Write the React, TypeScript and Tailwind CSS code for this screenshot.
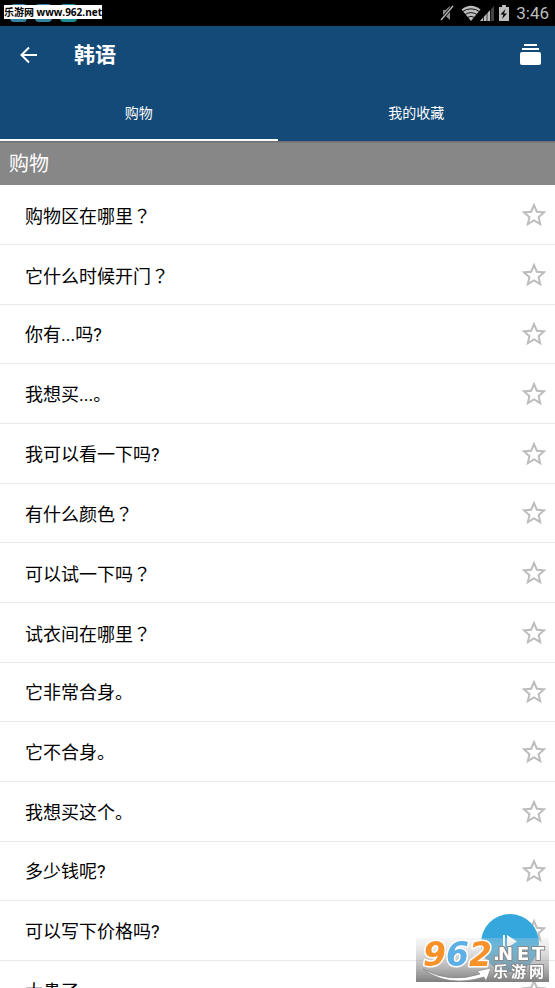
import { Fragment, useState } from "react";

const phrases = [
  "购物区在哪里？",
  "它什么时候开门？",
  "你有...吗?",
  "我想买...。",
  "我可以看一下吗?",
  "有什么颜色？",
  "可以试一下吗？",
  "试衣间在哪里？",
  "它非常合身。",
  "它不合身。",
  "我想买这个。",
  "多少钱呢?",
  "可以写下价格吗?",
  "太贵了。",
];

// Full-width question marks sit centred in their cell
function Phrase({ text }: { text: string }) {
  const parts = text.split("？");
  return (
    <span className="pt-0.5 text-[18px] leading-6 text-black">
      {parts.map((part, idx) => (
        <Fragment key={idx}>
          {idx > 0 && <span lang="zh-TW" className="font-['Noto_Sans_CJK_TC',sans-serif]">？</span>}
          {part}
        </Fragment>
      ))}
    </span>
  );
}

function StatusBar() {
  return (
    <div className="relative flex h-[26px] items-center justify-end bg-black pr-1.5 text-[#bdbdbd]">
      <div className="absolute left-[10px] top-1 flex gap-2">
        <span className="h-[18px] w-[17px] rounded bg-[#3583a0]" />
        <span className="h-[18px] w-[17px] rounded bg-[#3583a0]" />
        <span className="h-[18px] w-[17px] rounded bg-[#1c8c96]" />
      </div>
      <div className="absolute left-1 top-[5px] flex h-[14px] w-[98px] items-center justify-center whitespace-nowrap bg-white font-['Open_Sans','Noto_Sans_CJK_SC',sans-serif] text-[10px] font-bold leading-[14px] text-black">
        乐游网 www.962.net
      </div>
      <svg className="h-4 w-[70px]" viewBox="0 0 70 16" fill="currentColor" aria-hidden="true">
        <path d="M3 5h2.500l4.500-4v14l-4.500-4H3z" opacity=".75" />
        <path d="M1 15 13 1" stroke="#000" strokeWidth="3" />
        <path d="M1 15 13 1" stroke="currentColor" strokeWidth="1.3" />
        <path d="M21.500 4.500Q31 -3 40.500 4.500L31 16z" />
        <path d="M22 6.800Q31 .8 40 6.800M24.500 9.800Q31 5.400 37.500 9.800M27 12.600Q31 10 35 12.600" stroke="#000" strokeWidth=".9" fill="none" />
        <path d="M54 1v15H40z" opacity=".35" />
        <path d="M50 5.300V16H40z" />
        <path d="M43.500 4v12M47 4v12M50.500 4v12" stroke="#000" strokeWidth=".7" />
        <path d="M59 2h3V0h4v2h3v14H59z" />
        <path d="m65.500 4-5 5.500h3L62 14l5-5.500h-3z" fill="#000" />
      </svg>
      <span className="ml-1.5 text-[17px] leading-6">3:46</span>
    </div>
  );
}

function Star() {
  return (
    <svg className="size-[30px]" viewBox="0 0 24 24" fill="#bdbdbd" aria-hidden="true">
      <path d="M22 9.240l-7.190-.620L12 2 9.190 8.630 2 9.240l5.460 4.730L5.820 21 12 17.270 18.180 21l-1.630-7.030zM12 15.400l-3.760 2.270 1-4.280-3.320-2.880 4.380-.380L12 6.100l1.710 4.040 4.380.380-3.320 2.880 1 4.280z" />
    </svg>
  );
}

function Watermark() {
  return (
    <svg
      className="pointer-events-none fixed bottom-1.5 right-1.5 h-11 w-[133px] overflow-visible"
      viewBox="0 0 133 44"
      role="img"
      aria-label="962.NET 乐游网"
    >
      <defs>
        <linearGradient id="shade" x2="0" y2="1">
          <stop stopColor="#ddd" stopOpacity=".25" />
          <stop offset="1" stopColor="#777" stopOpacity=".95" />
        </linearGradient>
      </defs>
      <rect width="133" height="44" fill="url(#shade)" />
      <path d="M7 31Q34 46 64 36l-3-3 14-3-5 13-2-4Q32 50 7 31z" fill="#fff" stroke="#888" strokeWidth=".7" />
      <g
        fontFamily="DejaVu Sans, sans-serif"
        fontWeight="bold"
        fontStyle="italic"
        fontSize="33"
        stroke="#fff"
        strokeWidth="3"
        strokeLinejoin="round"
        paintOrder="stroke"
      >
        <text x="7" y="28" fill="#f7922a">9</text>
        <text x="30" y="28" fill="#5db0e6">6</text>
        <text x="53" y="28" fill="#f7922a">2</text>
      </g>
      <g fill="#fff" stroke="#888" strokeWidth="2" paintOrder="stroke" fontWeight="bold">
        <text x="77 82 101 116" y="22" fontFamily="DejaVu Sans, sans-serif" fontSize="18">.NET</text>
        <text x="77 95 113" y="39" fontFamily="Noto Sans CJK SC, sans-serif" fontSize="15">乐游网</text>
      </g>
    </svg>
  );
}

export default function App() {
  const [starred, setStarred] = useState<string[]>([]);

  const toggle = (text: string) =>
    setStarred((prev) => (prev.includes(text) ? prev.filter((t) => t !== text) : [...prev, text]));

  return (
    <div className="h-screen overflow-hidden bg-white font-[Roboto,'Noto_Sans_CJK_SC',sans-serif]">
      <StatusBar />

      <header className="bg-[#144a78] text-white">
        <div className="flex h-[57px] items-center pl-5 pr-3.5">
          <button type="button" aria-label="返回">
            <svg className="size-[18px]" viewBox="0 0 18 18" fill="none" stroke="currentColor" strokeWidth="2" aria-hidden="true">
              <path d="M17 9H2M9 1.500 1.500 9 9 16.500" />
            </svg>
          </button>
          <h1 className="ml-9 text-[21px] font-bold leading-7">韩语</h1>
          <button type="button" aria-label="卡片" className="ml-auto">
            <svg className="h-[22px] w-[21px]" viewBox="0 0 21 22" fill="currentColor" aria-hidden="true">
              <path d="M4 0h13v2H4zM2 4h17v2H2z" />
              <rect y="8" width="21" height="13" rx="2" />
            </svg>
          </button>
        </div>
        <div role="tablist" className="grid h-[58px] grid-cols-2 text-[14px] leading-5">
          <button type="button" role="tab" aria-selected="true" className="border-b-2 border-white pt-1">购物</button>
          <button type="button" role="tab" aria-selected="false" className="border-b-2 border-transparent pt-1">我的收藏</button>
        </div>
      </header>

      <main>
        <h2 className="flex h-11 items-center bg-[#878787] px-[9px] pt-0.5 text-[20px] leading-7 text-white shadow-[inset_0_1px_#6c7074,inset_0_2px_#7c7c7c]">
          购物
        </h2>
        <ul>
          {phrases.map((text) => (
            <li
              key={text}
              className="flex h-[60px] items-center justify-between border-b border-[#e9e9e9] pl-[25px] pr-1.5 nth-[3n]:h-[59px]"
            >
              <Phrase text={text} />
              <button type="button" aria-label={`收藏 ${text}`} aria-pressed={starred.includes(text)} onClick={() => toggle(text)}>
                <Star />
              </button>
            </li>
          ))}
        </ul>
      </main>

      <button
        type="button"
        aria-label="播放"
        className="fixed bottom-4 right-4 flex size-[58px] items-center justify-center rounded-full bg-[#35a7dc] text-white"
      >
        <svg className="size-4" viewBox="0 0 16 16" fill="currentColor" aria-hidden="true">
          <path d="M1 0h2v12H1zM5 0l10 6.500L5 13z" />
        </svg>
      </button>
      <Watermark />
    </div>
  );
}
